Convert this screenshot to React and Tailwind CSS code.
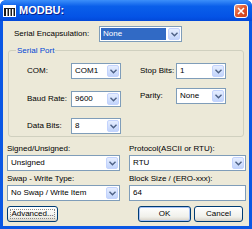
import React from "react";

const Chevron = () => (
  <svg width="7" height="5" viewBox="0 0 7 5">
    <path d="M0.5 0.8 L3.5 3.8 L6.5 0.8" fill="none" stroke="#4D6185" strokeWidth="1.4" />
  </svg>
);

function Combo({ value, w, selected, className = "" }) {
  return (
    <div
      className={`flex h-[16px] items-stretch border border-[#7F9DB9] bg-white ${className}`}
      style={{ width: w }}
    >
      <div className="flex flex-1 items-center p-[1px]">
        <div
          className={`flex h-full flex-1 items-center pl-[2px] leading-none ${
            selected ? "bg-[#316AC5] text-white" : "text-black"
          }`}
        >
          {value}
        </div>
      </div>
      <div className="m-[1px] flex w-[12px] items-center justify-center rounded-[2px] border border-[#C3D3FD] bg-[linear-gradient(#E6EEFF,#C2D4FB)]">
        <Chevron />
      </div>
    </div>
  );
}

function Btn({ children, w, def, focus }) {
  return (
    <div
      className={`flex h-[16px] items-center justify-center rounded-[3px] border border-[#003C74] bg-[linear-gradient(#FFFFFF,#F0F0EA_70%,#D6D0C5)] p-[2px] leading-none text-black ${
        def ? "shadow-[inset_0_0_0_1px_#A9C3F5]" : ""
      }`}
      style={{ width: w }}
    >
      <span
        className={`flex h-full w-full items-center justify-center ${
          focus ? "border border-dotted border-[#8A8A8A]" : ""
        }`}
      >
        {children}
      </span>
    </div>
  );
}

export default function App() {
  return (
    <div className="h-[229px] w-[252px] overflow-hidden rounded-t-[6px] bg-[#0A57E4] [font-family:'Liberation_Sans',Arial,sans-serif] text-[8px]">
      {/* Title bar */}
      <div className="flex h-[21px] items-center rounded-t-[6px] bg-[linear-gradient(#3C8FFA,#0A5FEA_30%,#0453E6_80%,#0248D8)] pl-[3px] pr-[4px]">
        <svg width="13" height="12" viewBox="0 0 13 12">
          <rect x="0.5" y="0.5" width="12" height="11" fill="#1B1B1B" stroke="#FFFFFF" />
          <rect x="1" y="1" width="11" height="2" fill="#FFFFFF" />
          <rect x="3" y="4" width="1.5" height="7" fill="#FFFFFF" />
          <rect x="6" y="4" width="1.5" height="7" fill="#FFFFFF" />
          <rect x="9" y="4" width="1.5" height="7" fill="#FFFFFF" />
        </svg>
        <span className="ml-[3px] text-[11px] font-bold text-white [text-shadow:1px_1px_0_#0A1E8C]">MODBU:</span>
        <div className="ml-auto flex h-[14px] w-[14px] items-center justify-center rounded-[3px] border border-white bg-[linear-gradient(135deg,#F0A080,#E2572F_45%,#C9401A)]">
          <svg width="8" height="8" viewBox="0 0 8 8">
            <path d="M1 1 L7 7 M7 1 L1 7" stroke="#FFFFFF" strokeWidth="1.6" />
          </svg>
        </div>
      </div>

      {/* Body */}
      <div className="mx-[3px] h-[205px] bg-[#ECE9D8] pt-[5px] text-black">
        <div className="flex items-center pl-[11px]">
          <span className="w-[85px]">Serial Encapsulation:</span>
          <Combo value="None" w={83} selected />
        </div>

        {/* Group box */}
        <div className="relative mx-[5px] mt-[8px] h-[87px] rounded-[3px] border border-[#D0D0BF]">
          <span className="absolute left-[7px] top-[-6px] bg-[#ECE9D8] px-[1px] text-[#0046D5]">Serial Port</span>
          <div className="flex pt-[12px]">
            <div className="flex w-[131px] flex-col pl-[18px]">
              <div className="flex items-center">
                <span className="w-[44px]">COM:</span>
                <Combo value="COM1" w={50} />
              </div>
              <div className="mt-[12px] flex items-center">
                <span className="w-[44px]">Baud Rate:</span>
                <Combo value="9600" w={50} />
              </div>
              <div className="mt-[11px] flex items-center">
                <span className="w-[44px]">Data Bits:</span>
                <Combo value="8" w={50} />
              </div>
            </div>
            <div className="flex flex-col">
              <div className="flex items-center">
                <span className="w-[36px]">Stop Bits:</span>
                <Combo value="1" w={50} />
              </div>
              <div className="mt-[9px] flex items-center">
                <span className="w-[36px]">Parity:</span>
                <Combo value="None" w={50} />
              </div>
            </div>
          </div>
        </div>

        {/* Bottom */}
        <div className="mt-[6px] flex pl-[4px]">
          <div className="flex w-[113px] flex-col">
            <span className="h-[12px] leading-[12px]">Signed/Unsigned:</span>
            <Combo value="Unsigned" w={113} />
            <span className="mt-[2px] h-[12px] leading-[12px]">Swap - Write Type:</span>
            <Combo value="No Swap / Write Item" w={113} />
            <div className="mt-[5px]">
              <Btn w={51} focus>Advanced...</Btn>
            </div>
          </div>
          <div className="ml-[9px] flex w-[117px] flex-col">
            <span className="h-[12px] leading-[12px]">Protocol(ASCII or RTU):</span>
            <Combo value="RTU" w={117} />
            <span className="mt-[2px] h-[12px] leading-[12px]">Block Size / (ERO-xxx):</span>
            <div className="flex h-[16px] w-[117px] items-center border border-[#7F9DB9] bg-white pl-[3px] leading-none">64</div>
            <div className="mt-[5px] flex pl-[9px]">
              <Btn w={53} def>OK</Btn>
              <div className="ml-[3px]">
                <Btn w={49}>Cancel</Btn>
              </div>
            </div>
          </div>
        </div>
      </div>
    </div>
  );
}
